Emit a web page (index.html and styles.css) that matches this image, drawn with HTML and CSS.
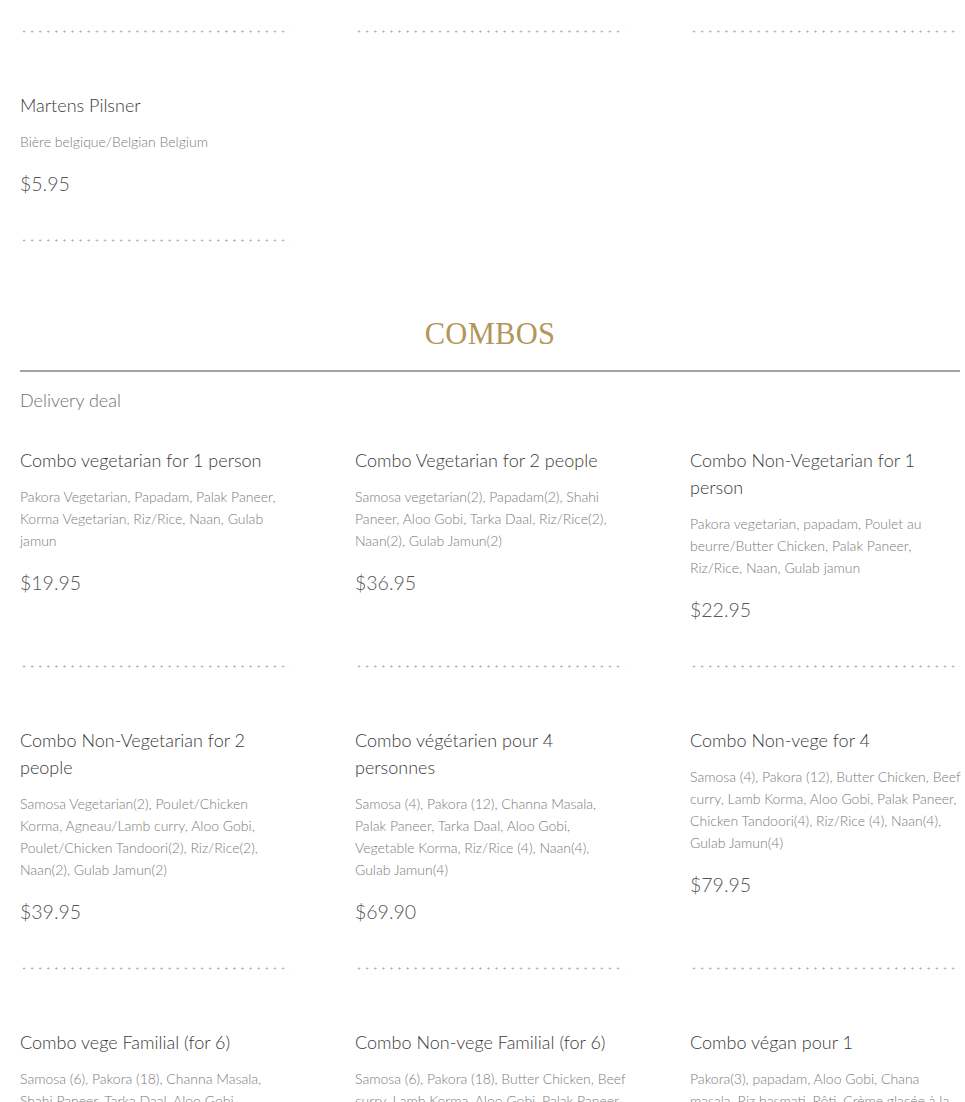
FILE: index.html
```html
<!DOCTYPE html>
<html lang="en">
<head>
<meta charset="utf-8">
<title>Menu - Combos</title>
<link rel="stylesheet" href="styles.css">
</head>
<body>
<div class="page">
  <div class="grid top-row">
    <div class="dots"></div>
    <div class="dots"></div>
    <div class="dots"></div>
  </div>

  <div class="grid">
    <div class="item">
      <h3 class="title">Martens Pilsner</h3>
      <p class="desc">Bière belgique/Belgian Belgium</p>
      <p class="price">$5.95</p>
      <div class="dots"></div>
    </div>
  </div>

  <section class="section">
    <h2 class="section-title">COMBOS</h2>
    <hr class="rule">
    <p class="subtitle">Delivery deal</p>

    <div class="grid">
      <div class="item">
        <h3 class="title">Combo vegetarian for 1 person</h3>
        <p class="desc">Pakora Vegetarian, Papadam, Palak Paneer,<br>Korma Vegetarian, Riz/Rice, Naan, Gulab<br>jamun</p>
        <p class="price">$19.95</p>
        <div class="dots"></div>
      </div>
      <div class="item">
        <h3 class="title">Combo Vegetarian for 2 people</h3>
        <p class="desc">Samosa vegetarian(2), Papadam(2), Shahi<br>Paneer, Aloo Gobi, Tarka Daal, Riz/Rice(2),<br>Naan(2), Gulab Jamun(2)</p>
        <p class="price">$36.95</p>
        <div class="dots"></div>
      </div>
      <div class="item">
        <h3 class="title">Combo Non-Vegetarian for 1 person</h3>
        <p class="desc">Pakora vegetarian, papadam, Poulet au<br>beurre/Butter Chicken, Palak Paneer,<br>Riz/Rice, Naan, Gulab jamun</p>
        <p class="price">$22.95</p>
        <div class="dots"></div>
      </div>

      <div class="item">
        <h3 class="title">Combo Non-Vegetarian for 2 people</h3>
        <p class="desc">Samosa Vegetarian(2), Poulet/Chicken<br>Korma, Agneau/Lamb curry, Aloo Gobi,<br>Poulet/Chicken Tandoori(2), Riz/Rice(2),<br>Naan(2), Gulab Jamun(2)</p>
        <p class="price">$39.95</p>
        <div class="dots"></div>
      </div>
      <div class="item">
        <h3 class="title">Combo végétarien pour 4 personnes</h3>
        <p class="desc">Samosa (4), Pakora (12), Channa Masala,<br>Palak Paneer, Tarka Daal, Aloo Gobi,<br>Vegetable Korma, Riz/Rice (4), Naan(4),<br>Gulab Jamun(4)</p>
        <p class="price">$69.90</p>
        <div class="dots"></div>
      </div>
      <div class="item">
        <h3 class="title">Combo Non-vege for 4</h3>
        <p class="desc">Samosa (4), Pakora (12), Butter Chicken, Beef<br>curry, Lamb Korma, Aloo Gobi, Palak Paneer,<br>Chicken Tandoori(4), Riz/Rice (4), Naan(4),<br>Gulab Jamun(4)</p>
        <p class="price">$79.95</p>
        <div class="dots"></div>
      </div>

      <div class="item">
        <h3 class="title">Combo vege Familial (for 6)</h3>
        <p class="desc">Samosa (6), Pakora (18), Channa Masala,<br>Shahi Paneer, Tarka Daal, Aloo Gobi,<br>Vegetable Korma, Riz/Rice (6), Naan(6),<br>Gulab Jamun(6)</p>
        <p class="price">$99.95</p>
        <div class="dots"></div>
      </div>
      <div class="item">
        <h3 class="title">Combo Non-vege Familial (for 6)</h3>
        <p class="desc">Samosa (6), Pakora (18), Butter Chicken, Beef<br>curry, Lamb Korma, Aloo Gobi, Palak Paneer,<br>Chicken Tandoori(6), Riz/Rice (6), Naan(6),<br>Gulab Jamun(6)</p>
        <p class="price">$119.95</p>
        <div class="dots"></div>
      </div>
      <div class="item">
        <h3 class="title">Combo végan pour 1</h3>
        <p class="desc">Pakora(3), papadam, Aloo Gobi, Chana<br>masala, Riz basmati, Rôti, Crème glacée à la<br>mangue</p>
        <p class="price">$22.95</p>
        <div class="dots"></div>
      </div>
    </div>
  </section>
</div>
</body>
</html>
```
FILE: styles.css
```css
* { box-sizing: border-box; }

html, body {
  margin: 0;
  padding: 0;
  background: #ffffff;
}

body {
  font-family: "Lato", "Liberation Sans", sans-serif;
  font-weight: 300;
  color: #444;
}

.page {
  width: 940px;
  margin: 0 0 0 20px;
}

.grid {
  display: grid;
  grid-template-columns: repeat(3, 270px);
  column-gap: 65px;
}

.top-row {
  padding-top: 30px;
}

.dots {
  height: 3px;
  background-image: radial-gradient(circle, #b8b8b8 0.9px, transparent 1.3px);
  background-size: 8.1px 3px;
  background-repeat: repeat-x;
  background-position: 0 0;
}

.item {
  display: flex;
  flex-direction: column;
  padding-top: 59px;
}

.item .dots {
  margin-top: auto;
}

.title {
  margin: 0;
  font-size: 18px;
  line-height: 27px;
  font-weight: 300;
  color: #3a3a3a;
}

.desc {
  margin: 12px 0 0;
  font-size: 14px;
  line-height: 22px;
  color: #7b7b7b;
  white-space: nowrap;
}

.price {
  margin: 17px 0 41px;
  font-size: 19.5px;
  line-height: 28px;
  color: #555;
}

.section {
  padding-top: 74px;
}

.section-title {
  margin: 0;
  text-align: center;
  font-family: "Liberation Serif", "DejaVu Serif", serif;
  font-weight: 400;
  font-size: 30.5px;
  line-height: 36px;
  letter-spacing: 0.3px;
  color: #b3965a;
}

.rule {
  margin: 18px 0 0;
  border: 0;
  height: 2px;
  background: #a3a3a3;
}

.subtitle {
  margin: 15px 0 0;
  font-size: 18px;
  line-height: 27px;
  color: #707070;
}

.section .grid .item:nth-child(-n+3) {
  padding-top: 33px;
}
```
